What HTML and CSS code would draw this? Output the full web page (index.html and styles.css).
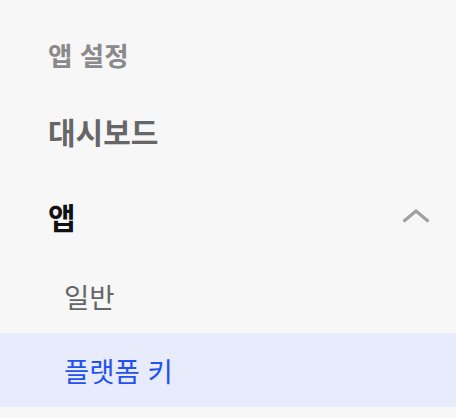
FILE: index.html
```html
<!DOCTYPE html>
<html lang="ko">
<head>
<meta charset="utf-8">
<link rel="stylesheet" href="styles.css">
</head>
<body>
<nav class="nav">
  <div class="section-title">앱 설정</div>
  <div class="item item-dim">대시보드</div>
  <div class="item item-open">
    <span>앱</span>
    <svg class="chevron" width="28" height="14" viewBox="0 0 28 14"><path d="M1.5 12.5 L14 2 L26.5 12.5" fill="none" stroke="#a0a0a0" stroke-width="3.2"/></svg>
  </div>
  <div class="sub">
    <div class="sub-item">일반</div>
    <div class="sub-item active">플랫폼 키</div>
  </div>
</nav>
</body>
</html>
```
FILE: styles.css
```css
html, body {
  margin: 0;
  padding: 0;
  background: #f7f7f7;
}
body {
  width: 456px;
  height: 418px;
  overflow: hidden;
  font-family: "Noto Sans CJK KR", "Noto Sans", sans-serif;
}
.nav {
  display: flex;
  flex-direction: column;
  padding-top: 36px;
}
.section-title {
  height: 38px;
  line-height: 38px;
  padding-left: 48px;
  font-size: 26.5px;
  font-weight: 700;
  color: #8a8a8a;
}
.item {
  height: 76px;
  display: flex;
  align-items: center;
  padding-left: 48px;
  padding-right: 26px;
  font-size: 30px;
  font-weight: 700;
}
.item-dim {
  margin-top: 19px;
  color: #666666;
}
.item-open {
  margin-top: 9px;
  color: #111111;
  justify-content: space-between;
}
.chevron {
  display: block;
}
.sub {
  padding-top: 5px;
  display: flex;
  flex-direction: column;
}
.sub-item {
  height: 74px;
  display: flex;
  align-items: center;
  padding-left: 64px;
  font-size: 27.5px;
  font-weight: 400;
  color: #666666;
}
.sub-item.active {
  background: #e8ebfc;
  color: #2352ee;
}
```
